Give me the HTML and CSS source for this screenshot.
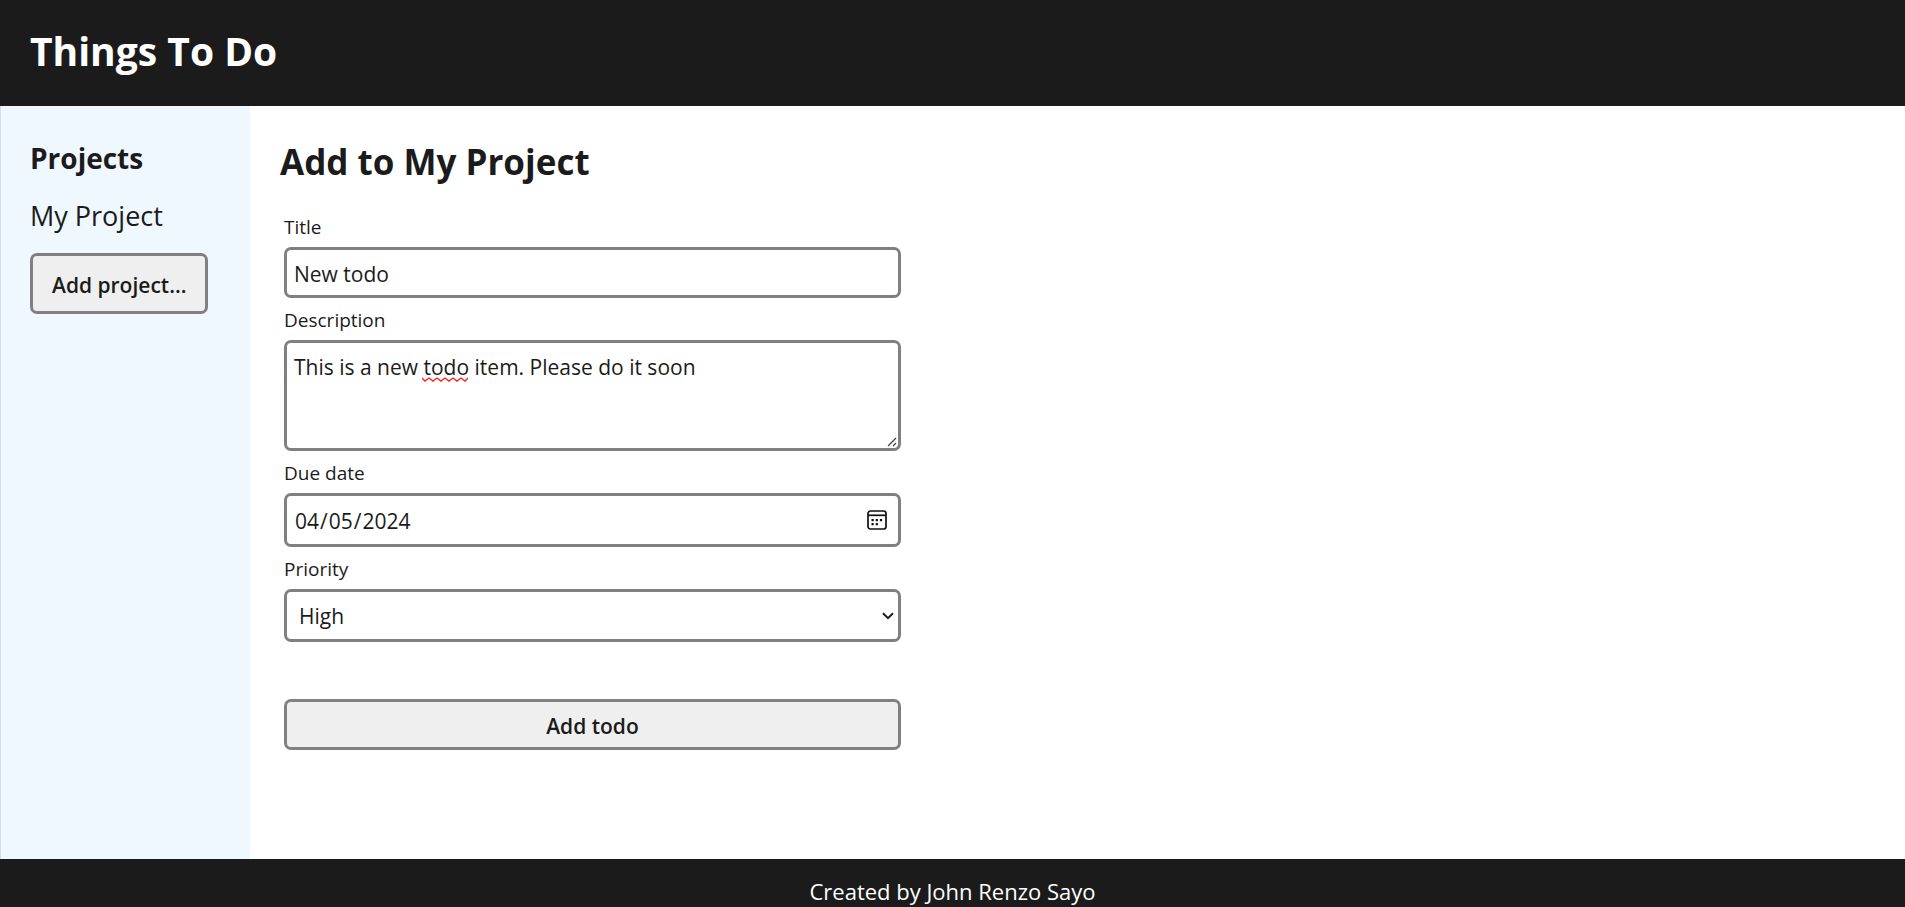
FILE: index.html
```html
<!DOCTYPE html>
<html lang="en-US">
<head>
<meta charset="utf-8">
<meta name="viewport" content="width=device-width, initial-scale=1">
<title>Things To Do</title>
<link rel="stylesheet" href="styles.css">
</head>
<body>
<header class="header"><h1 class="header-title">Things To Do</h1></header>
<div class="content">
  <aside class="sidebar">
    <h2 class="sidebar-title">Projects</h2>
    <p class="project">My Project</p>
    <button class="button add-project" type="button">Add project...</button>
  </aside>
  <main class="main">
    <h2 class="main-title">Add to My Project</h2>
    <form class="form">
      <label class="label" for="title">Title</label>
      <input class="control" id="title" type="text" value="New todo">
      <label class="label" for="description">Description</label>
      <div class="field">
        <textarea class="control description" id="description" spellcheck="false">This is a new todo item. Please do it soon</textarea>
        <svg class="squiggle" width="46" height="5" viewBox="0 0 46 5" fill="none" stroke="#f22" stroke-width="1.4" aria-hidden="true"><path d="M0 1l3 3 4-3 4 3 4-3 4 3 4-3 4 3 4-3 4 3 4-3 4 3 3-3"/></svg>
        <svg class="grip" width="10" height="10" viewBox="0 0 10 10" fill="none" stroke="#444" stroke-width="1.3" aria-hidden="true"><path d="M1 9l8-8M6 9l3-3" stroke-dasharray="12 0"/></svg>
      </div>
      <label class="label" for="due">Due date</label>
      <div class="field">
        <input class="control date" id="due" type="date" value="2024-04-05">
        <svg class="calendar" width="20" height="20" viewBox="0 0 20 20" aria-hidden="true"><rect x="1" y="1" width="18" height="18" rx="2.5" fill="none" stroke="#111" stroke-width="1.7"/><path d="M1 5.300h18" stroke="#111" stroke-width="1.7"/><path d="M4.500 9h2.200v2.200H4.500zM8.700 9h2.200v2.200H8.700zM12.900 9h2.200v2.200h-2.200zM4.500 13h2.200v2.200H4.500zM8.700 13h2.200v2.200H8.700z" fill="#111"/></svg>
      </div>
      <label class="label" for="priority">Priority</label>
      <div class="field">
        <select class="control select" id="priority"><option>High</option><option>Medium</option><option>Low</option></select>
        <svg class="chevron" width="12" height="8" viewBox="0 0 12 8" fill="none" stroke="#1b1b1b" stroke-width="2" aria-hidden="true"><path d="M1 1.200l5 5 5-5"/></svg>
      </div>
      <button class="button submit" type="submit">Add todo</button>
    </form>
  </main>
</div>
<footer class="footer">Created by John Renzo Sayo</footer>
</body>
</html>
```
FILE: styles.css
```css
* { box-sizing: border-box; }
body {
  margin: 0;
  min-height: 100vh;
  display: flex;
  flex-direction: column;
  font-family: "Open Sans", "Noto Sans", sans-serif;
  font-size: 21px;
  color: #1b1b1b;
  background: #fff;
}
h1, h2, p { margin: 0; }
.header { padding: 23px 30px 27px; background: #1b1b1b; color: #fff; }
.header-title { font-size: 39px; line-height: 56px; }
.content { flex: 1; display: flex; }
.sidebar {
  width: 250px;
  padding: 32px 29px;
  border-left: 1px solid #d5dde6;
  background: #eff7ff;
  display: flex;
  flex-direction: column;
  align-items: flex-start;
}
.sidebar-title { font-size: 28px; line-height: 40px; }
.project { margin: 18px 0; font-size: 27px; line-height: 39px; }
.main { flex: 1; padding: 32px 30px; }
.main-title { font-size: 35px; line-height: 48px; }
.form { width: 100%; max-width: 625px; padding: 19px 4px; display: flex; flex-direction: column; }
.field { position: relative; display: flex; }
.label { padding: 9px 0 7px; font-size: 19px; line-height: 26px; }
.control, .button {
  border: 3px solid #808080;
  border-radius: 7px;
  font: inherit;
  color: inherit;
}
.control { width: 100%; height: 51px; padding: 2px 7px 0; background: #fff; outline: 0; }
.description { height: 111px; padding: 9px 7px; line-height: 30px; resize: vertical; }
.description::-webkit-resizer { background: transparent; }
.date { height: 54px; }
.date::-webkit-calendar-picker-indicator { opacity: 0; }
.select { height: 53px; padding: 0 12px; appearance: none; }
.squiggle { position: absolute; left: 138px; top: 37px; }
.grip { position: absolute; right: 4px; bottom: 4px; pointer-events: none; }
.calendar { position: absolute; right: 14px; top: 17px; pointer-events: none; }
.chevron { position: absolute; right: 7px; top: 23px; pointer-events: none; }
.button { padding: 2px 19px 0; background: #efefef; font-weight: 600; cursor: pointer; }
.add-project { height: 61px; white-space: nowrap; }
.submit { height: 51px; margin-top: 57px; }
.footer { padding: 17px 0 1px; background: #1b1b1b; color: #fff; font-size: 22px; line-height: 30px; text-align: center; }
```
